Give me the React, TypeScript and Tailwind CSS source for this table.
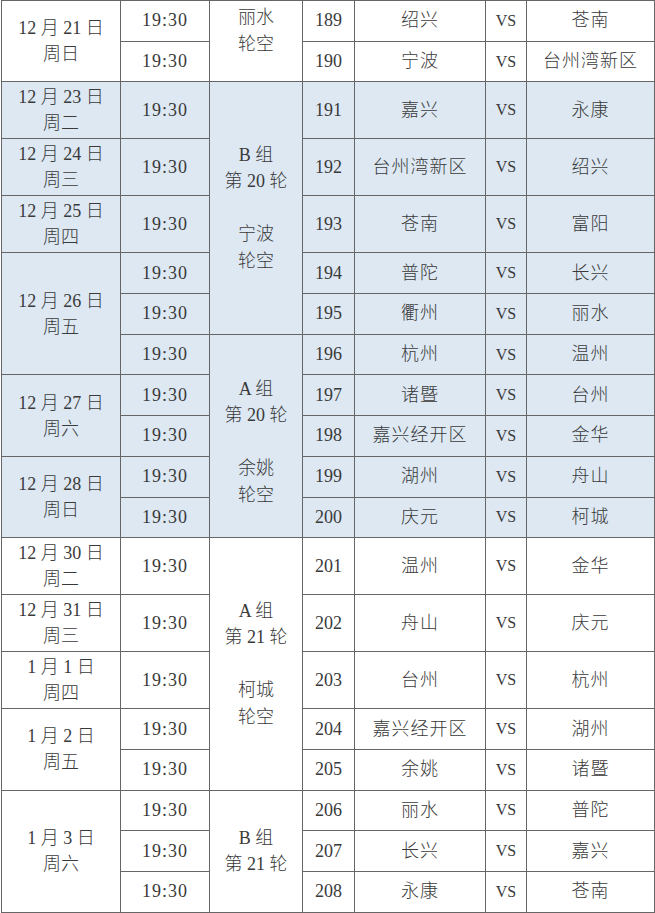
import React from "react"

type DateCell = { m: string; d: string; w: string; span: number }
type RoundCell = { lines: string[]; span: number; cls?: string }
type Row = {
  date?: DateCell
  round?: RoundCell
  no: string
  home: string
  away: string
  tall?: boolean
  blue?: boolean
}

const rows: Row[] = [
  { date: { m: "12", d: "21", w: "周日", span: 2 }, round: { lines: ["丽水", "轮空"], span: 2, cls: "align-top pt-[3px]" }, no: "189", home: "绍兴", away: "苍南" },
  { no: "190", home: "宁波", away: "台州湾新区" },
  { date: { m: "12", d: "23", w: "周二", span: 1 }, round: { lines: ["B 组", "第 20 轮", "", "宁波", "轮空"], span: 5 }, no: "191", home: "嘉兴", away: "永康", tall: true, blue: true },
  { date: { m: "12", d: "24", w: "周三", span: 1 }, no: "192", home: "台州湾新区", away: "绍兴", tall: true, blue: true },
  { date: { m: "12", d: "25", w: "周四", span: 1 }, no: "193", home: "苍南", away: "富阳", tall: true, blue: true },
  { date: { m: "12", d: "26", w: "周五", span: 3 }, no: "194", home: "普陀", away: "长兴", blue: true },
  { no: "195", home: "衢州", away: "丽水", blue: true },
  { round: { lines: ["A 组", "第 20 轮", "", "余姚", "轮空"], span: 5, cls: "pt-[12px]" }, no: "196", home: "杭州", away: "温州", blue: true },
  { date: { m: "12", d: "27", w: "周六", span: 2 }, no: "197", home: "诸暨", away: "台州", blue: true },
  { no: "198", home: "嘉兴经开区", away: "金华", blue: true },
  { date: { m: "12", d: "28", w: "周日", span: 2 }, no: "199", home: "湖州", away: "舟山", blue: true },
  { no: "200", home: "庆元", away: "柯城", blue: true },
  { date: { m: "12", d: "30", w: "周二", span: 1 }, round: { lines: ["A 组", "第 21 轮", "", "柯城", "轮空"], span: 5 }, no: "201", home: "温州", away: "金华", tall: true },
  { date: { m: "12", d: "31", w: "周三", span: 1 }, no: "202", home: "舟山", away: "庆元", tall: true },
  { date: { m: "1", d: "1", w: "周四", span: 1 }, no: "203", home: "台州", away: "杭州", tall: true },
  { date: { m: "1", d: "2", w: "周五", span: 2 }, no: "204", home: "嘉兴经开区", away: "湖州" },
  { no: "205", home: "余姚", away: "诸暨" },
  { date: { m: "1", d: "3", w: "周六", span: 3 }, round: { lines: ["B 组", "第 21 轮"], span: 3 }, no: "206", home: "丽水", away: "普陀" },
  { no: "207", home: "长兴", away: "嘉兴" },
  { no: "208", home: "永康", away: "苍南" },
]

const cell = "border border-[#666666] text-center align-middle p-0"

export default function App() {
  return (
    <div
      className="w-[655px] h-[913px] overflow-hidden bg-white text-[#3a3a3a] text-[18px] font-light"
      style={{ fontFamily: '"Liberation Serif", "Noto Sans CJK SC", serif' }}
    >
      <table className="table-fixed border-collapse w-[653px] ml-[1px]">
        <colgroup>
          <col className="w-[119px]" />
          <col className="w-[89px]" />
          <col className="w-[93px]" />
          <col className="w-[52px]" />
          <col className="w-[131px]" />
          <col className="w-[41px]" />
          <col className="w-[128px]" />
        </colgroup>
        <tbody>
          {rows.map((r) => (
            <tr key={r.no} className={r.blue ? "bg-[#dde8f3]" : "bg-white"}>
              {r.date && (
                <td rowSpan={r.date.span} className={`${cell} leading-[26px]`}>
                  <div>
                    {r.date.m} 月 {r.date.d} 日
                  </div>
                  <div>{r.date.w}</div>
                </td>
              )}
              <td className={`${cell} tracking-[1px] ${r.tall ? "h-[57px]" : "h-[40.7px]"}`}>19:30</td>
              {r.round && (
                <td rowSpan={r.round.span} className={`${cell} leading-[26.5px] ${r.round.cls ?? ""}`}>
                  {r.round.lines.map((l, i) => (
                    <div key={i} className="h-[26.5px]">
                      {l}
                    </div>
                  ))}
                </td>
              )}
              <td className={cell}>{r.no}</td>
              <td className={`${cell} tracking-[1px]`}>{r.home}</td>
              <td className={`${cell} text-[16px]`}>VS</td>
              <td className={`${cell} tracking-[1px]`}>{r.away}</td>
            </tr>
          ))}
        </tbody>
      </table>
    </div>
  )
}
